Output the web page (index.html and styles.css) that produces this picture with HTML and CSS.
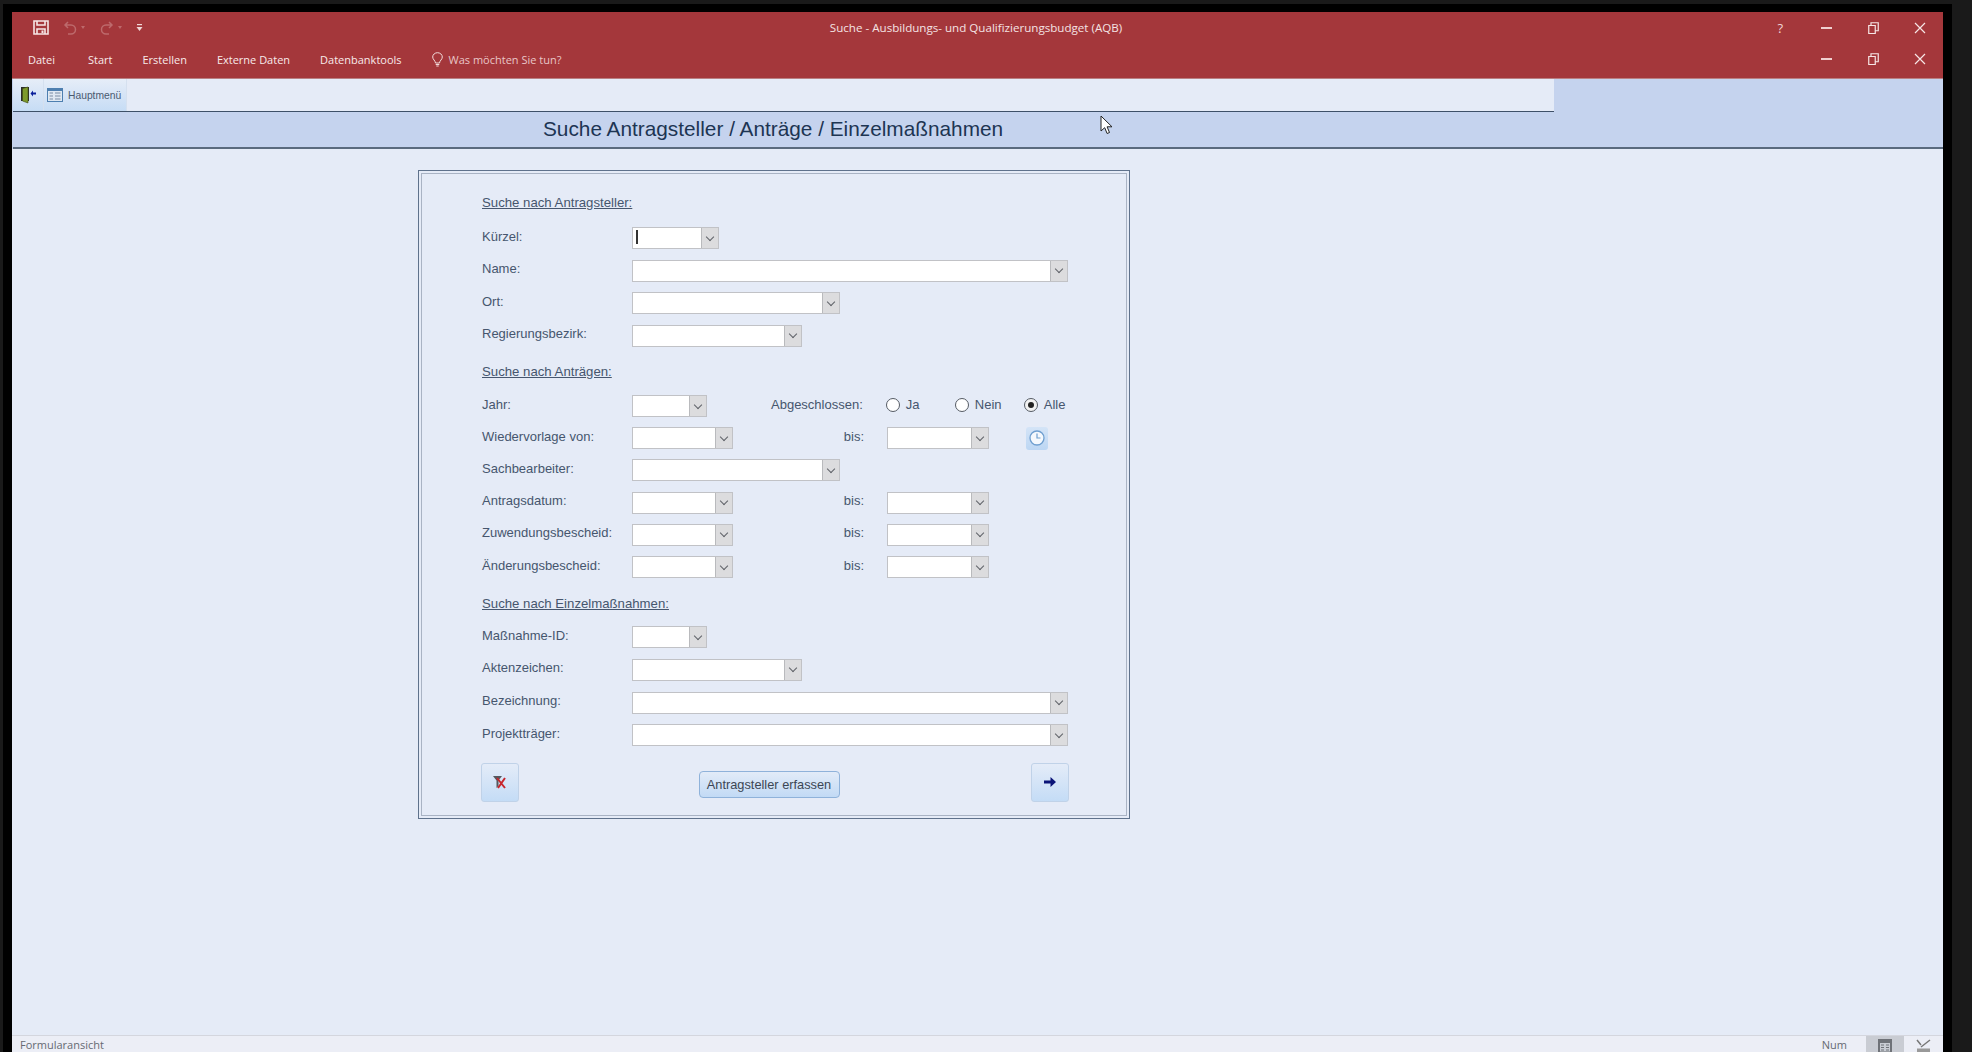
FILE: index.html
```html
<!DOCTYPE html>
<html lang="de">
<head>
    <meta charset="UTF-8">
    <title>Suche - Ausbildungs- und Qualifizierungsbudget (AQB)</title>
    <link rel="stylesheet" href="styles.css">
</head>
<body>
<div class="frame">
<div class="window">
    <div class="titlebar">
        <div class="qat">
            <svg class="ic-save" width="16" height="15" viewBox="0 0 16 15"><path d="M1 1h14v13H1z M4 1v4h8V1 M4 14V9h8v5" fill="none" stroke="#f6e6e6" stroke-width="1.6"/><rect x="8.500" y="10.500" width="2" height="2.500" fill="#f6e6e6"/></svg>
            <svg class="ic-undo" width="14" height="14" viewBox="0 0 14 14"><path d="M5 1 2 4l3 3M2 4h6a4.500 4.500 0 0 1 0 9H5" fill="none" stroke="#bd6a6c" stroke-width="1.500"/></svg>
            <span class="qat-drop dim"></span>
            <svg class="ic-redo" width="14" height="14" viewBox="0 0 14 14"><path d="M9 1l3 3-3 3M12 4H6a4.500 4.500 0 0 0 0 9h3" fill="none" stroke="#bd6a6c" stroke-width="1.500"/></svg>
            <span class="qat-drop dim"></span>
            <svg class="ic-custom" width="7" height="9" viewBox="0 0 7 9"><path d="M1 1h5v1.200H1z" fill="#f0d8d8"/><path d="M0.500 4h6L3.500 8z" fill="#f0d8d8"/></svg>
        </div>
        <div class="title-text">Suche - Ausbildungs- und Qualifizierungsbudget (AQB)</div>
        <div class="wincontrols">
            <span class="winbtn help">?</span>
            <span class="winbtn"><i class="ic-min"></i></span>
            <span class="winbtn"><svg width="11" height="12" viewBox="0 0 11 12"><path d="M.75 3.500h6.500v8H.75z M3 3.500V.75h7.250v8H7.500" fill="none" stroke="#f6e6e6" stroke-width="1.200"/></svg></span>
            <span class="winbtn"><svg width="12" height="12" viewBox="0 0 12 12"><path d="M1 1l10 10M11 1 1 11" stroke="#f6e6e6" stroke-width="1.200"/></svg></span>
        </div>
    </div>
    <div class="tabbar">
        <span class="tab tab-datei">Datei</span>
        <span class="tab tab-start">Start</span>
        <span class="tab tab-erstellen">Erstellen</span>
        <span class="tab tab-extern">Externe Daten</span>
        <span class="tab tab-tools">Datenbanktools</span>
        <svg class="ic-bulb" width="11" height="15" viewBox="0 0 11 15"><path d="M3.500 11C3.300 8.500.7 7.500.7 5a4.800 4.300 0 0 1 9.600 0c0 2.500-2.600 3.500-2.800 6z" fill="none" stroke="#f2dcdc" stroke-width="1"/><path d="M3.700 12.500h3.600M4.300 14h2.400" stroke="#f2dcdc" stroke-width="1"/></svg>
        <span class="tell">Was möchten Sie tun?</span>
        <div class="wincontrols inner">
            <span class="winbtn"><i class="ic-min"></i></span>
            <span class="winbtn"><svg width="11" height="12" viewBox="0 0 11 12"><path d="M.75 3.500h6.500v8H.75z M3 3.500V.75h7.250v8H7.500" fill="none" stroke="#f6e6e6" stroke-width="1.200"/></svg></span>
            <span class="winbtn"><svg width="12" height="12" viewBox="0 0 12 12"><path d="M1 1l10 10M11 1 1 11" stroke="#f6e6e6" stroke-width="1.200"/></svg></span>
        </div>
    </div>

    <div class="formhead">
        <div class="toolbar">
            <span class="tool tool-exit">
                <svg width="17" height="18" viewBox="0 0 17 18"><path d="M1 1h8v14H1z" fill="#2b2b2b"/><path d="M2.500 2.500 8 1v16l-5.500-2z" fill="#7d9a2c" stroke="#3c4a14" stroke-width=".6"/><path d="M10.500 7.500 13 4.500v2h3v2h-3v2z" fill="#0a1f9a"/></svg>
            </span>
            <span class="tool tool-menu">
                <svg width="16" height="14" viewBox="0 0 16 14"><rect width="16" height="14" fill="#4e7fb0"/><rect x="1" y="3" width="14" height="10" fill="#dfe8f2"/><path d="M2.500 5h3.500M2.500 8h3.500M2.500 11h3.500M8 5h5.500M8 8h5.500M8 11h5.500" stroke="#7b8ca3" stroke-width="1.200"/></svg>
                Hauptmenü
            </span>
        </div>
        <div class="headline"><h1>Suche Antragsteller / Anträge / Einzelmaßnahmen</h1></div>
    </div>

    <div class="content">
        <form class="searchbox">
            <div class="group group-a">
                <div class="section">Suche nach Antragsteller:</div>
                <div class="row"><label>Kürzel:</label><div class="combo w-87"><i class="caret"></i><b></b></div></div>
                <div class="row"><label>Name:</label><div class="combo w-436"><b></b></div></div>
                <div class="row"><label>Ort:</label><div class="combo w-208"><b></b></div></div>
                <div class="row"><label>Regierungsbezirk:</label><div class="combo w-170"><b></b></div></div>
            </div>

            <div class="group group-b">
                <div class="section">Suche nach Anträgen:</div>
                <div class="row">
                    <label>Jahr:</label><div class="combo w-75"><b></b></div>
                    <label class="lbl-done">Abgeschlossen:</label>
                    <span class="radio radio-ja"><i></i>Ja</span>
                    <span class="radio radio-nein"><i></i>Nein</span>
                    <span class="radio on"><i></i>Alle</span>
                </div>
                <div class="row">
                    <label>Wiedervorlage von:</label><div class="combo w-101"><b></b></div>
                    <label class="lbl-bis">bis:</label><div class="combo w-102"><b></b></div>
                    <span class="clock">
                        <svg width="16" height="16" viewBox="0 0 16 16"><circle cx="8" cy="8" r="7" fill="#f4f8fd" stroke="#6f9fd0" stroke-width="1.300"/><path d="M8 3.500V8h3.500" fill="none" stroke="#6f9fd0" stroke-width="1.200"/></svg>
                    </span>
                </div>
                <div class="row"><label>Sachbearbeiter:</label><div class="combo w-208"><b></b></div></div>
                <div class="row"><label>Antragsdatum:</label><div class="combo w-101"><b></b></div><label class="lbl-bis">bis:</label><div class="combo w-102"><b></b></div></div>
                <div class="row"><label>Zuwendungsbescheid:</label><div class="combo w-101"><b></b></div><label class="lbl-bis">bis:</label><div class="combo w-102"><b></b></div></div>
                <div class="row"><label>Änderungsbescheid:</label><div class="combo w-101"><b></b></div><label class="lbl-bis">bis:</label><div class="combo w-102"><b></b></div></div>
            </div>

            <div class="group group-c">
                <div class="section">Suche nach Einzelmaßnahmen:</div>
                <div class="row"><label>Maßnahme-ID:</label><div class="combo w-75"><b></b></div></div>
                <div class="row"><label>Aktenzeichen:</label><div class="combo w-170"><b></b></div></div>
                <div class="row"><label>Bezeichnung:</label><div class="combo w-436"><b></b></div></div>
                <div class="row"><label>Projektträger:</label><div class="combo w-436"><b></b></div></div>
            </div>

            <div class="actions">
                <span class="btn-icon">
                    <svg width="16" height="16" viewBox="0 0 16 16"><path d="M1 2h9L6.500 6.500V12L4.500 14V6.500z" fill="#55585e"/><path d="M5 4l8 10M13 4 6 14" stroke="#c8262c" stroke-width="2"/></svg>
                </span>
                <span class="btn-text">Antragsteller erfassen</span>
                <span class="btn-icon">
                    <svg width="14" height="12" viewBox="0 0 14 12"><path d="M1 4.500h6.500V1L13 6l-5.500 5V7.500H1z" fill="#0b1478"/></svg>
                </span>
            </div>
        </form>
    </div>

    <div class="statusbar">
        <span class="status-text">Formularansicht</span>
        <span class="status-num">Num</span>
        <span class="view view-on">
            <svg width="14" height="14" viewBox="0 0 14 14"><rect width="14" height="14" fill="#6f7278"/><path d="M2 4h10v8.500H2z" fill="#c9ccd3"/><path d="M3 6h3M8 6h3M3 8.500h3M8 8.500h3M3 11h3M8 11h3" stroke="#6f7278"/></svg>
        </span>
        <span class="view">
            <svg width="15" height="14" viewBox="0 0 15 14"><path d="M1 1l4 5M14 1 5 8" fill="none" stroke="#777" stroke-width="1.500"/><path d="M1 9.500h13V13H1z" fill="#999"/></svg>
        </span>
    </div>

    <svg class="pointer" width="13" height="20" viewBox="0 0 13 20"><path d="M1 1v15l3.700-3.300 2.400 5.800 2.400-1-2.400-5.700H12z" fill="#fff" stroke="#222" stroke-width="1"/></svg>
</div>
</div>
</body>
</html>
```
FILE: styles.css
```css
* {
    box-sizing: border-box;
}
html, body {
    margin: 0;
    height: 100%;
    overflow: hidden;
}
body {
    background-color: #1a1a1a;
    padding: 4px 20px 0 3px;
    font-family: "Liberation Sans", Arial, sans-serif;
    font-size: 13px;
    color: #46566e;
}
.frame {
    background: #000;
    height: 1048px;
    padding: 8px 9px 0 9px;
}
.window {
    position: relative;
    height: 1040px;
    display: flex;
    flex-direction: column;
    background: #e5ebf7;
}

/* title bar */
.titlebar {
    height: 30px;
    background: #a4373b;
    display: flex;
    align-items: center;
    position: relative;
    padding-top: 1px;
}
.qat {
    display: flex;
    align-items: center;
    padding-left: 21px;
}
.ic-undo {
    margin-left: 14px;
}
.ic-redo {
    margin-left: 15px;
}
.ic-custom {
    margin-left: 14px;
}
.qat-drop {
    width: 0;
    height: 0;
    margin-left: 4px;
    border: 2.5px solid transparent;
    border-top: 3px solid #bd6a6c;
    border-bottom: 0;
}
.title-text {
    flex: 1;
    text-align: center;
    font-family: "Open Sans", sans-serif;
    font-size: 11.600px;
    color: #f4e3e3;
    margin-left: -40px;
    margin-right: -92px;
}
.wincontrols {
    display: flex;
    align-items: center;
    margin-left: auto;
}
.winbtn {
    width: 46.500px;
    text-align: center;
    color: #f0d6d6;
    display: flex;
    justify-content: center;
    align-items: center;
}
.help {
    font-family: "Open Sans", sans-serif;
    font-size: 13px;
}
.ic-min {
    display: block;
    width: 11px;
    height: 2px;
    background: #f0d0d0;
}

/* ribbon tabs */
.tabbar {
    height: 37px;
    background: #a4373b;
    border-bottom: 1px solid #b98083;
    display: flex;
    align-items: center;
    font-family: "Open Sans", sans-serif;
    font-size: 11px;
    color: #f8eaea;
    padding-bottom: 2px;
}
.tab-datei {
    margin-left: 16px;
}
.tab-start {
    margin-left: 33px;
}
.tab-erstellen {
    margin-left: 30px;
}
.tab-extern {
    margin-left: 30px;
}
.tab-tools {
    margin-left: 30px;
}
.ic-bulb {
    margin-left: 30px;
}
.tell {
    margin-left: 6px;
    color: #e9c6c7;
}

/* access header */
.formhead {
    background: #c5d3ee;
}
.toolbar {
    width: 1541px;
    height: 33px;
    margin-left: 1px;
    background: #e5ebf7;
    border-bottom: 1px solid #3e5068;
    display: flex;
}
.tool {
    height: 32px;
    display: flex;
    align-items: center;
    background: linear-gradient(#e6edf8, #c6dcf5);
    border-right: 1px solid #d5e0ef;
    font-size: 10.300px;
    color: #4a5a70;
}
.tool-exit {
    width: 31px;
    justify-content: center;
}
.tool-menu {
    width: 83px;
    padding-left: 3px;
    gap: 5px;
}
.headline {
    height: 37px;
    margin-left: 1px;
    padding-bottom: 2px;
    border-bottom: 2px solid #5a6a7e;
    display: flex;
    align-items: center;
    padding-left: 530px;
}
.headline h1 {
    margin: 0;
    font-weight: normal;
    font-size: 20.800px;
    color: #1d3553;
}

/* search form */
.content {
    flex: 1;
    margin-left: 1px;
    padding: 21px 0 0 405px;
}
.searchbox {
    width: 712px;
    height: 649px;
    padding: 16px 0 0 63px;
    background: #e5ebf7;
    border: 1px solid #5f728c;
    box-shadow: inset 0 0 0 2px #e5ebf7, inset 0 0 0 3px #a9b3c4;
}
.section {
    line-height: 32px;
    font-size: 13.200px;
    text-decoration: underline;
}
.row {
    display: flex;
    align-items: center;
}
.row label {
    padding-bottom: 4px;
}
.row > label:first-child {
    width: 150px;
}
.group-a .section {
    height: 35px;
}
.group-a .row {
    height: 32.500px;
}
.group-b {
    margin-top: 4px;
}
.group-b .section {
    height: 34px;
}
.group-b .row {
    height: 32.200px;
}
.group-c {
    margin-top: 4.800px;
}
.group-c .section {
    height: 33px;
}
.group-c .row {
    height: 32.700px;
}
.combo {
    height: 22px;
    background: #fff;
    border: 1.500px solid #c1c2c6;
    display: flex;
    align-items: center;
    justify-content: flex-end;
    position: relative;
}
.combo b {
    width: 17px;
    height: 100%;
    background: #dcdcde;
    border-left: 1px solid #b9babd;
    display: flex;
    align-items: center;
    justify-content: center;
}
.combo b::after {
    content: "";
    width: 5px;
    height: 5px;
    margin-top: -3px;
    border-right: 1.200px solid #5f6268;
    border-bottom: 1.200px solid #5f6268;
    transform: rotate(45deg);
}
.caret {
    position: absolute;
    left: 3px;
    top: 2px;
    width: 1.500px;
    height: 14px;
    background: #333;
}
.w-75 {
    width: 75px;
}
.w-87 {
    width: 87px;
}
.w-101 {
    width: 101px;
}
.w-102 {
    width: 102px;
}
.w-170 {
    width: 170px;
}
.w-208 {
    width: 208px;
}
.w-436 {
    width: 436px;
}
.lbl-bis {
    width: 131px;
    margin-right: 23px;
    text-align: right;
}
.lbl-done {
    margin-left: 64px;
    margin-right: 23px;
}
.radio {
    display: flex;
    align-items: center;
    gap: 6px;
    margin-bottom: 3px;
}
.radio i {
    width: 14px;
    height: 14px;
    border-radius: 50%;
    background: #fff;
    border: 1.300px solid #555b64;
    display: flex;
    align-items: center;
    justify-content: center;
}
.radio.on i {
    background: #f2f2f2;
}
.radio.on i::after {
    content: "";
    width: 6px;
    height: 6px;
    border-radius: 50%;
    background: #222;
}
.radio-ja {
    width: 69px;
}
.radio-nein {
    width: 69px;
}
.clock {
    width: 22px;
    height: 23px;
    margin-left: 37px;
    background: linear-gradient(#d4e4f7, #bcd6f3);
    border-radius: 3px;
    display: flex;
    align-items: center;
    justify-content: center;
}
.actions {
    width: 588px;
    margin-top: 11px;
    margin-left: -1px;
    display: flex;
    justify-content: space-between;
    align-items: center;
}
.btn-icon {
    width: 38px;
    height: 39px;
    background: linear-gradient(#e4ecf8, #c4dcf6);
    border: 1px solid #c0d2e8;
    border-radius: 3px;
    display: flex;
    align-items: center;
    justify-content: center;
}
.btn-text {
    width: 141px;
    height: 27px;
    margin-top: 4px;
    margin-left: -12px;
    font-size: 12.800px;
    background: linear-gradient(#e2ebf8, #c2daf5);
    border: 1px solid #8fb2da;
    border-radius: 4px;
    display: flex;
    align-items: center;
    justify-content: center;
    color: #3c4654;
}

/* status bar */
.statusbar {
    height: 17px;
    background: #eceef6;
    border-top: 1px solid #d4d6de;
    display: flex;
    align-items: center;
    padding-left: 8px;
    font-size: 11px;
    color: #666a72;
    font-family: "Open Sans", sans-serif;
}
.status-text {
    font-size: 11px;
}
.status-num {
    margin-left: auto;
    margin-right: 19px;
}
.view {
    width: 38px;
    height: 16px;
    display: flex;
    justify-content: center;
    padding-top: 3px;
    overflow: hidden;
}
.view-on {
    background: #c9ccd3;
}
.view + .view {
    margin-right: 1px;
}

.pointer {
    position: absolute;
    left: 1088px;
    top: 103px;
}
```
